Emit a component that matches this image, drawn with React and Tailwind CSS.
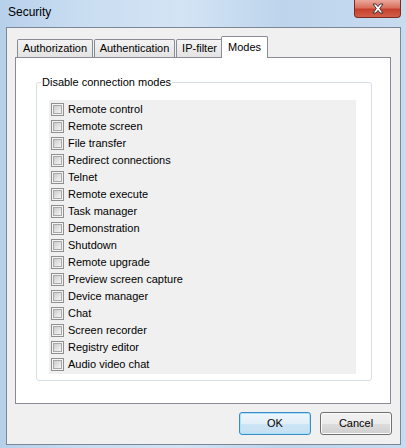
import React from "react";

const items = [
  "Remote control",
  "Remote screen",
  "File transfer",
  "Redirect connections",
  "Telnet",
  "Remote execute",
  "Task manager",
  "Demonstration",
  "Shutdown",
  "Remote upgrade",
  "Preview screen capture",
  "Device manager",
  "Chat",
  "Screen recorder",
  "Registry editor",
  "Audio video chat",
];

function Checkbox() {
  return (
    <div className="w-[13px] h-[13px] border border-[#8e8f8f] bg-[#f4f4f4] p-[1px] shrink-0">
      <div className="w-full h-full border border-[#a8a8a8] bg-[linear-gradient(135deg,#cbcbcb,#f6f6f6)]" />
    </div>
  );
}

function Tab({ label, w }) {
  return (
    <div
      className={`${w} h-[18px] border border-b-0 border-[#898c95] rounded-t-[2px] bg-[linear-gradient(#f3f3f3,#e3e3e3)] flex items-center justify-center text-[11px] text-black`}
    >
      {label}
    </div>
  );
}

export default function App() {
  return (
    <div
      className="w-[406px] h-[448px] overflow-hidden flex flex-col bg-[linear-gradient(90deg,#b7d0ea_0%,#c9ddf1_20%,#d3e4f4_45%,#bdd4ec_70%,#c8dcf0_100%)]"
      style={{ fontFamily: '"Liberation Sans", Arial, sans-serif' }}
    >
      {/* title bar */}
      <div className="h-[27px] flex justify-between shrink-0">
        <div className="pl-[8px] pt-[5px] text-[12px] leading-[15px] text-black">Security</div>
        <div className="mr-[5px] w-[47px] h-[18px] rounded-b-[4px] border border-t-0 border-[#7d2a20] bg-[linear-gradient(#eba89c_0%,#d9715f_45%,#c5402d_55%,#d2604a_100%)] flex items-center justify-center">
          <svg width="14" height="11" viewBox="0 0 14 11">
            <path
              d="M2 1 L5 1 L7 3.6 L9 1 L12 1 L8.7 5.5 L12 10 L9 10 L7 7.4 L5 10 L2 10 L5.3 5.5 Z"
              fill="#ffffff"
              stroke="#4a3030"
              strokeWidth="1"
              strokeLinejoin="round"
            />
          </svg>
        </div>
      </div>

      {/* client area */}
      <div className="ml-[6px] w-[395px] h-[418px] border border-[#7a8797] bg-[#f0f0f0] flex flex-col">
        <div className="pt-[8px] pl-[8px] flex flex-col">
          {/* tab strip */}
          <div className="flex items-end h-[21px] pl-[2px] gap-[1px]">
            <Tab label="Authorization" w="w-[76px]" />
            <Tab label="Authentication" w="w-[81px]" />
            <Tab label="IP-filter" w="w-[47px]" />
            <div className="relative z-10 -ml-[3px] -mb-[1px] w-[47px] h-[22px] border border-b-0 border-[#898c95] rounded-t-[2px] bg-white flex items-start justify-center pt-[2px] text-[11px] text-black">
              Modes
            </div>
          </div>
          {/* panel */}
          <div className="w-[376px] h-[347px] border border-[#898c95] bg-white flex flex-col">
            <fieldset className="ml-[20px] mt-[18px] w-[336px] h-[305px] border border-[#d5dfe5] rounded-[3px]">
              <legend className="ml-[4px] px-[1px] text-[11px] leading-[13px] text-black">
                Disable connection modes
              </legend>
              <div className="ml-[12px] mt-[11px] w-[307px] h-[274px] bg-[#f0f0f0] py-[1px] pl-[2px] flex flex-col">
                {items.map((t) => (
                  <div key={t} className="h-[17px] flex items-center gap-[4px] text-[11px] text-black">
                    <Checkbox />
                    <span>{t}</span>
                  </div>
                ))}
              </div>
            </fieldset>
          </div>
        </div>
        {/* buttons */}
        <div className="flex justify-end gap-[9px] pr-[8px] mt-[8px]">
          <button className="w-[72px] h-[23px] rounded-[3px] border border-[#3c8bc4] shadow-[inset_0_0_0_1px_#a9e2f9] bg-[linear-gradient(#eef6fb_0%,#e2eff8_50%,#cde5f5_51%,#c5e0f3_100%)] text-[11px] text-black">
            OK
          </button>
          <button className="w-[72px] h-[23px] rounded-[3px] border border-[#707070] shadow-[inset_0_0_0_1px_#fbfbfb] bg-[linear-gradient(#f2f2f2_0%,#ebebeb_50%,#dddddd_51%,#cfcfcf_100%)] text-[11px] text-black">
            Cancel
          </button>
        </div>
      </div>
    </div>
  );
}
